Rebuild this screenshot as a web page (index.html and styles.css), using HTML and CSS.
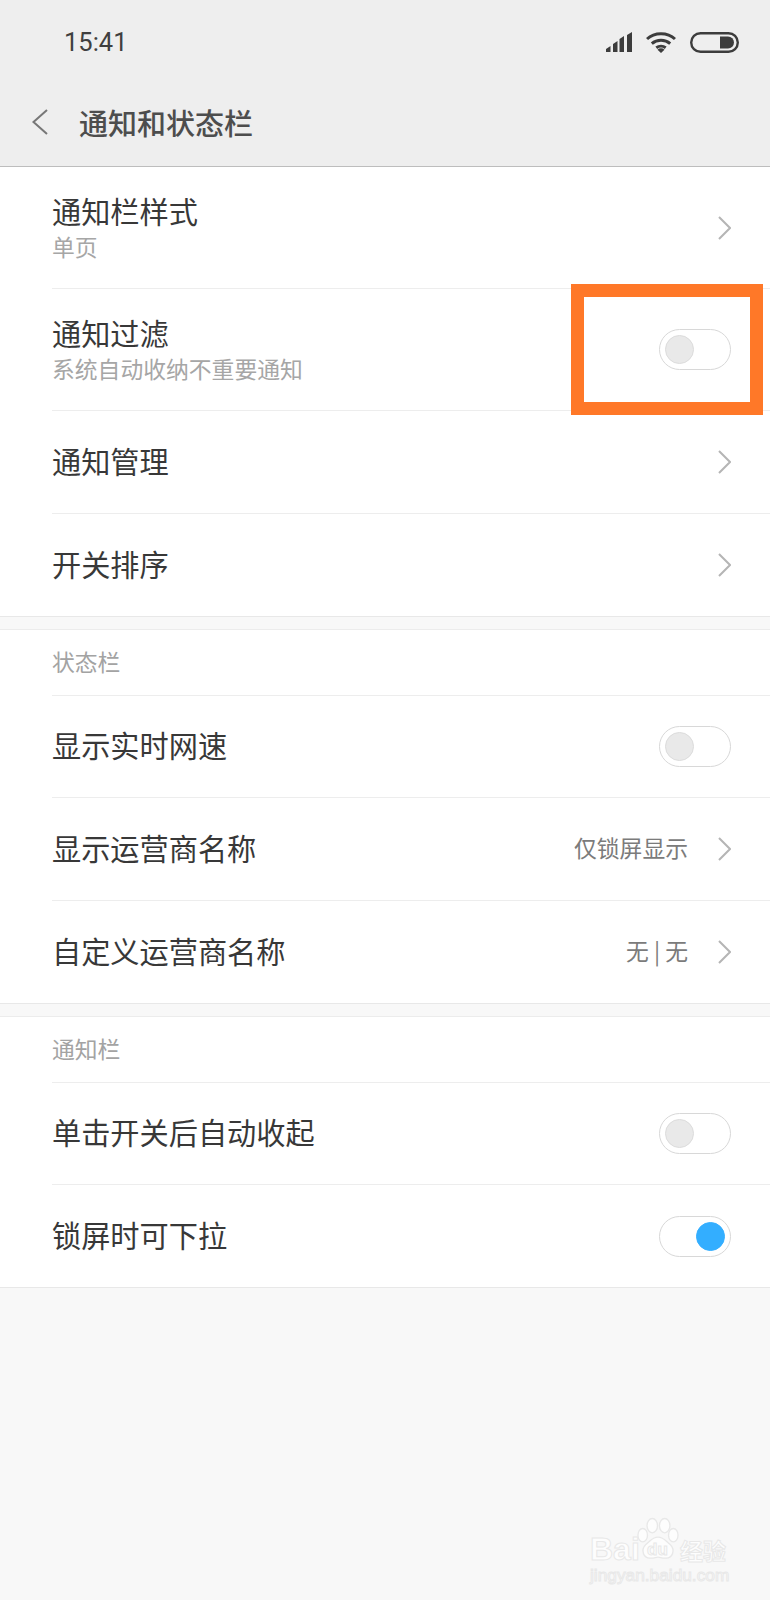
FILE: index.html
```html
<!DOCTYPE html>
<html lang="zh">
<head>
<meta charset="utf-8">
<title>通知和状态栏</title>
<link rel="stylesheet" href="styles.css">
</head>
<body>
<div class="phone">
  <header class="top">
    <div class="status">
      <span class="time">15:41</span>
      <div class="status-icons">
        <svg class="sig" width="26" height="20" viewBox="0 0 26 20"><path d="M0 20v-3l4.500-3v6zM7 20v-8l4.500-3v11zM13.500 20V7L18 4v16zM21 20V3l5-3v20z" fill="#3c3c3c"/></svg>
        <svg class="wifi" width="30" height="22" viewBox="0 0 30 22"><g fill="none" stroke="#3c3c3c" stroke-width="3"><path d="M1 8C8.500 1 21.500 1 29 8"/><path d="M5.800 12.700C11 8.200 19 8.200 24.200 12.700"/><path d="M10.300 16.700C13 14.700 17 14.700 19.700 16.700"/></g><path d="M15 22l-3.500-3.300a5 5 0 0 1 7 0z" fill="#3c3c3c"/></svg>
        <svg class="batt" width="49" height="21" viewBox="0 0 49 21"><rect x="1.200" y="1.200" width="46.600" height="18.600" rx="9.300" fill="none" stroke="#3c3c3c" stroke-width="2.400"/><path d="M30 4.500h8a6 6 0 0 1 0 12h-8z" fill="#3c3c3c"/></svg>
      </div>
    </div>
    <div class="nav">
      <svg class="back" width="16" height="26" viewBox="0 0 16 26"><path d="M15 1 1.500 13 15 25" fill="none" stroke="#777" stroke-width="2"/></svg>
      <h1 class="title">通知和状态栏</h1>
    </div>
  </header>

  <main>
    <section class="group">
      <div class="row row-tall">
        <div class="texts"><div class="label">通知栏样式</div><div class="sub">单页</div></div>
        <svg class="chev" width="13" height="24" viewBox="0 0 13 24"><path d="M1 1 12 12 1 23" fill="none" stroke="#b5b5b5" stroke-width="2"/></svg>
      </div>
      <div class="row row-tall">
        <div class="texts"><div class="label">通知过滤</div><div class="sub">系统自动收纳不重要通知</div></div>
        <span class="switch"><span class="knob"></span></span>
        <div class="mark"></div>
      </div>
      <div class="row">
        <div class="label">通知管理</div>
        <svg class="chev" width="13" height="24" viewBox="0 0 13 24"><path d="M1 1 12 12 1 23" fill="none" stroke="#b5b5b5" stroke-width="2"/></svg>
      </div>
      <div class="row last">
        <div class="label">开关排序</div>
        <svg class="chev" width="13" height="24" viewBox="0 0 13 24"><path d="M1 1 12 12 1 23" fill="none" stroke="#b5b5b5" stroke-width="2"/></svg>
      </div>
    </section>

    <section class="group">
      <div class="caption">状态栏</div>
      <div class="row">
        <div class="label">显示实时网速</div>
        <span class="switch"><span class="knob"></span></span>
      </div>
      <div class="row">
        <div class="label">显示运营商名称</div>
        <span class="value">仅锁屏显示</span>
        <svg class="chev" width="13" height="24" viewBox="0 0 13 24"><path d="M1 1 12 12 1 23" fill="none" stroke="#b5b5b5" stroke-width="2"/></svg>
      </div>
      <div class="row last">
        <div class="label">自定义运营商名称</div>
        <span class="value">无 | 无</span>
        <svg class="chev" width="13" height="24" viewBox="0 0 13 24"><path d="M1 1 12 12 1 23" fill="none" stroke="#b5b5b5" stroke-width="2"/></svg>
      </div>
    </section>

    <section class="group">
      <div class="caption">通知栏</div>
      <div class="row">
        <div class="label">单击开关后自动收起</div>
        <span class="switch"><span class="knob"></span></span>
      </div>
      <div class="row last">
        <div class="label">锁屏时可下拉</div>
        <span class="switch on"><span class="knob"></span></span>
      </div>
    </section>
  </main>

  <div class="watermark">
    <div class="wm-top">
      <span class="wm-bai">Bai</span>
      <svg class="wm-paw" width="42" height="44" viewBox="0 0 44 44"><g fill="#fdfdfd" stroke="#e8e8e8" stroke-width="1.400"><ellipse cx="6" cy="18" rx="5" ry="7"/><ellipse cx="16" cy="8" rx="5.500" ry="7.500"/><ellipse cx="29" cy="8" rx="5.500" ry="7.500"/><ellipse cx="38" cy="18" rx="5" ry="7"/><path d="M22 20c6 0 8 4 13 8 5 5 3 15-6 14-3 0-5-1-7-1s-4 1-7 1c-9 1-11-9-6-14 5-4 7-8 13-8z"/></g></svg>
      <span class="wm-du">du</span>
      <span class="wm-cn">经验</span>
    </div>
    <div class="wm-url">jingyan.baidu.com</div>
  </div>
</div>
</body>
</html>
```
FILE: styles.css
```css
* { box-sizing: border-box; }
html, body { margin: 0; padding: 0; }
body {
  background: #f8f8f8;
  font-family: "Noto Sans CJK SC", "Noto Sans", sans-serif;
}
.phone {
  position: relative;
  width: 770px;
  height: 1600px;
  overflow: hidden;
  background: #f8f8f8;
}
.top {
  height: 167px;
  background: #eeeeee;
  border-bottom: 1px solid #bdbdbd;
}
.status {
  height: 84px;
  padding: 0 31px 0 64px;
  display: flex;
  align-items: center;
  justify-content: space-between;
}
.time {
  font-family: Roboto, sans-serif;
  font-size: 25.500px;
  color: #3f3f3f;
}
.status-icons {
  display: flex;
  align-items: center;
  gap: 14px;
}
.nav {
  height: 76px;
  padding: 0 0 0 32px;
  display: flex;
  align-items: center;
  gap: 31px;
}
.title {
  margin: 0;
  font-size: 29px;
  font-weight: 500;
  color: #4d4d4d;
  line-height: 1;
}
.group {
  background: #fff;
  margin-bottom: 12.500px;
  border-bottom: 1px solid #e8e8e8;
  border-top: 1px solid #ececec;
}
.group:first-child { border-top: 0; }
.row {
  position: relative;
  height: 102.500px;
  margin-left: 52px;
  padding-right: 39px;
  display: flex;
  align-items: center;
  border-bottom: 1px solid #ededed;
}
.row-tall { height: 122px; }
.row.last { border-bottom: 0; height: 102px; }
.texts { display: flex; flex-direction: column; padding-bottom: 3.500px; }
.label {
  font-size: 29.200px;
  line-height: 40px;
  color: #383838;
}
.row > .label { padding-bottom: 4px; }
.sub {
  margin-top: 1.500px;
  font-size: 22.800px;
  line-height: 30px;
  color: #a6a6a6;
}
.caption {
  height: 65.500px;
  margin-left: 52px;
  padding-bottom: 2px;
  display: flex;
  align-items: center;
  font-size: 22.800px;
  color: #a3a3a3;
  border-bottom: 1px solid #ededed;
}
.value {
  margin-left: auto;
  margin-right: 30px;
  padding-bottom: 2px;
  font-size: 22.800px;
  color: #7b7b7b;
}
.chev { flex: none; }
.row > .label + .chev, .texts + .chev { margin-left: auto; }
.switch {
  margin-left: auto;
  width: 72px;
  height: 41px;
  border: 1px solid #d8d8d8;
  border-radius: 21px;
  background: #fff;
  display: flex;
  align-items: center;
  padding: 0 5px;
  flex: none;
}
.knob {
  width: 29px;
  height: 29px;
  border-radius: 50%;
  background: #e9e9e9;
  border: 1px solid #dcdcdc;
}
.switch.on { justify-content: flex-end; }
.switch.on .knob { background: #33aeff; border-color: #33aeff; }
.mark {
  position: absolute;
  left: 519px;
  top: -5px;
  width: 192px;
  height: 131px;
  border: 13px solid #ff7828;
}
.watermark {
  position: absolute;
  left: 590px;
  top: 1517px;
  width: 140px;
}
.wm-top { position: relative; height: 47px; }
.wm-bai, .wm-du, .wm-cn, .wm-url {
  position: absolute;
  color: #fdfdfd;
  -webkit-text-stroke: 1px #e8e8e8;
  font-family: "Liberation Sans", sans-serif;
  font-weight: 700;
}
.wm-bai { left: 0; top: 12px; font-size: 32px; line-height: 40px; }
.wm-paw { position: absolute; left: 47px; top: 0; }
.wm-du { left: 57px; top: 23px; font-size: 17px; line-height: 20px; }
.wm-cn { left: 90px; top: 18px; font-size: 23px; line-height: 30px; font-family: "Noto Sans CJK SC", sans-serif; }
.wm-url { left: 0; top: 47px; font-size: 17.300px; line-height: 22px; white-space: nowrap; font-weight: 400; }
```
